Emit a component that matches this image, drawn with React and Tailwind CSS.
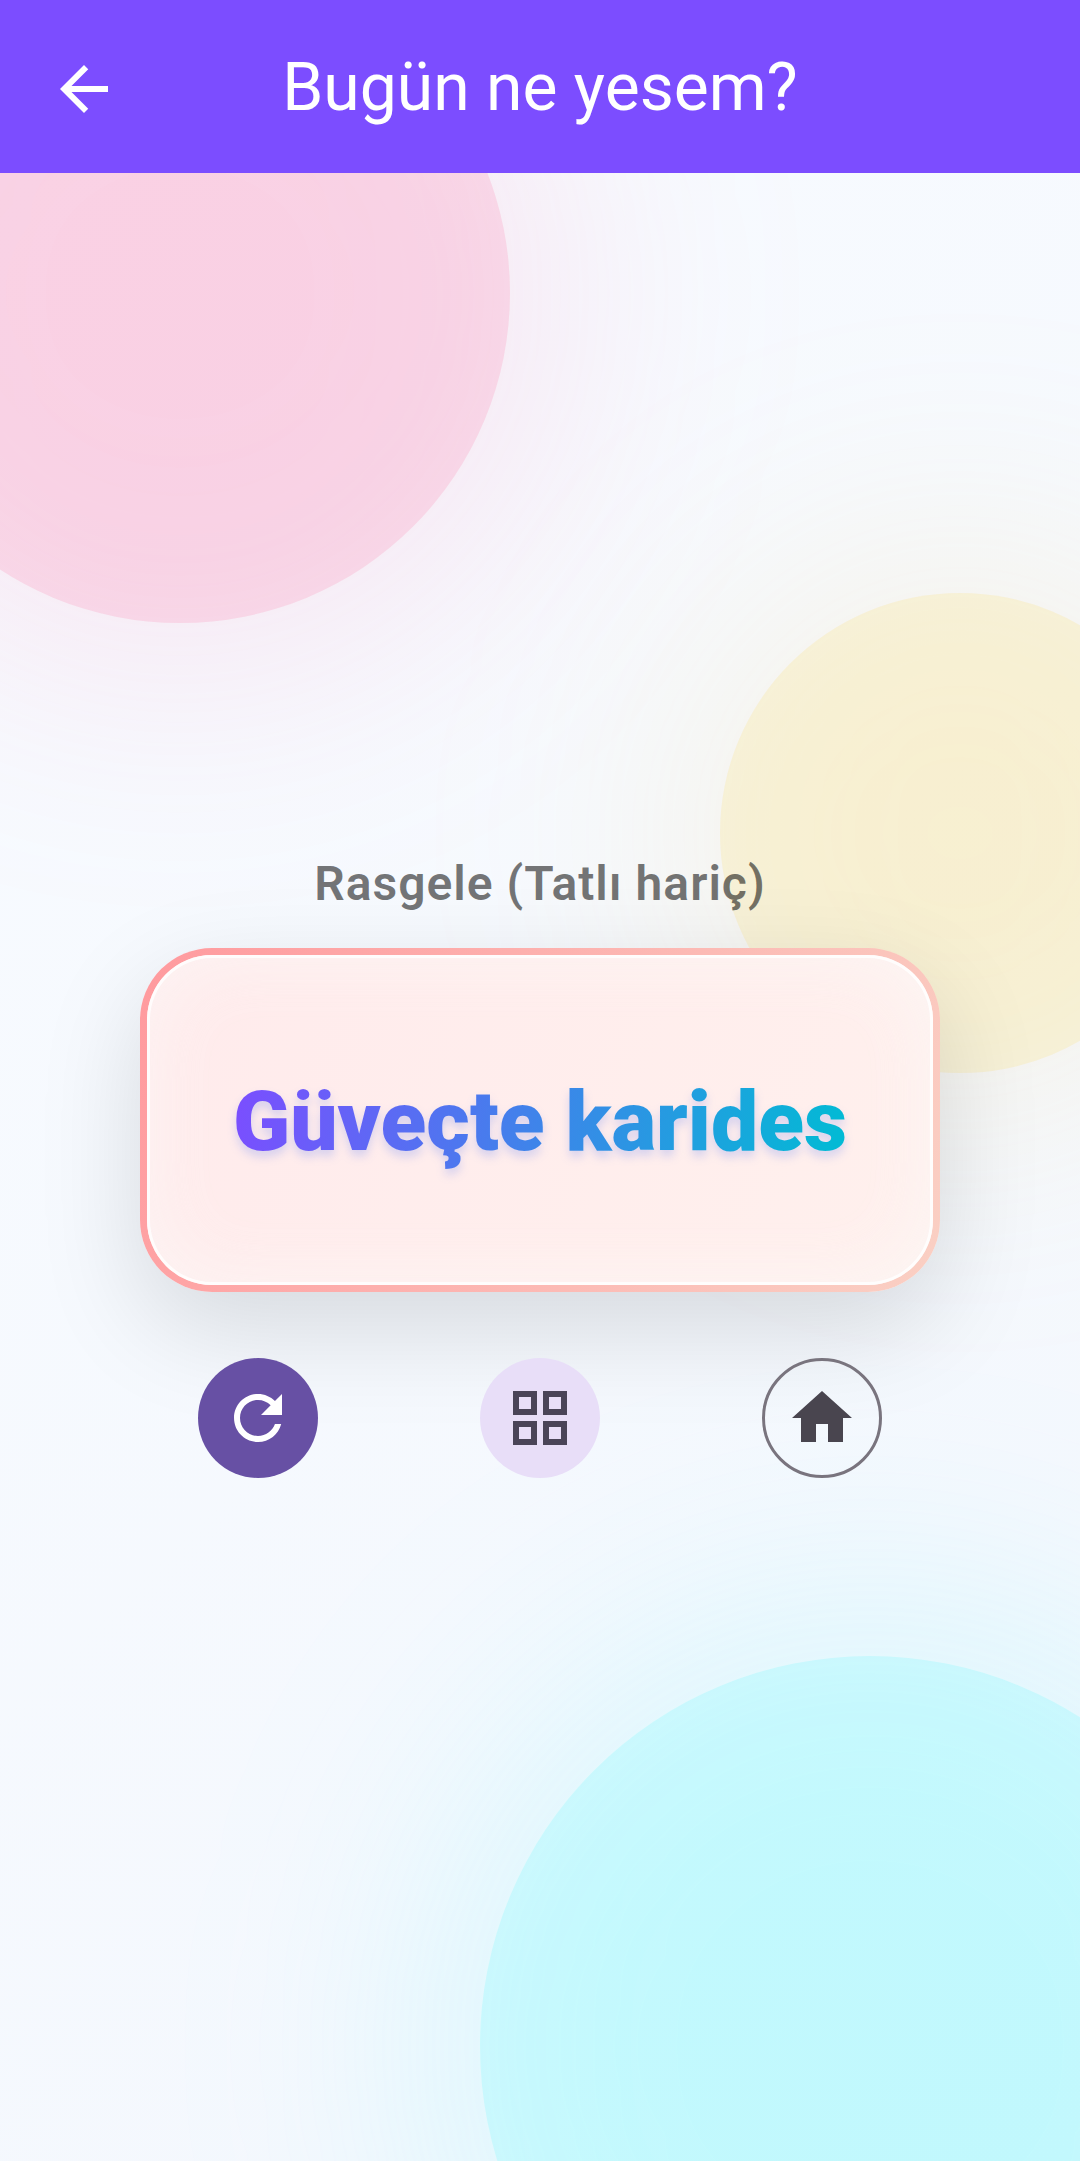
import React from "react";

function Icon({ path }) {
  return (
    <svg viewBox="0 0 24 24" className="size-[72px]" fill="currentColor" aria-hidden="true">
      <path d={path} />
    </svg>
  );
}

const ICONS = {
  back: "M20 11H7.83l5.59-5.59L12 4l-8 8 8 8 1.41-1.41L7.83 13H20v-2z",
  refresh:
    "M17.65 6.35C16.2 4.9 14.21 4 12 4c-4.42 0-7.99 3.58-7.99 8s3.57 8 7.99 8c3.73 0 6.84-2.55 7.73-6h-2.08c-.82 2.33-3.04 4-5.65 4-3.31 0-6-2.69-6-6s2.69-6 6-6c1.66 0 3.14.69 4.22 1.78L13 11h7V4l-2.35 2.35z",
  grid: "M3 3v8h8V3H3zm6 6H5V5h4v4zm-6 4v8h8v-8H3zm6 6H5v-4h4v4zm4-16v8h8V3h-8zm6 6h-4V5h4v4zm-6 4v8h8v-8h-8zm6 6h-4v-4h4v4z",
  home: "M10 20v-6h4v6h5v-8h3L12 3 2 12h3v8z",
};

/* A translucent disc with a wide soft glow of the same colour. */
function Blob({ place, glow, disc }) {
  return (
    <div className={`absolute rounded-full ${place}`}>
      <div className={`absolute -inset-[60px] rounded-full blur-[120px] ${glow}`} />
      <div className={`absolute inset-0 rounded-full ${disc}`} />
    </div>
  );
}

function RoundButton({ label, icon, look }) {
  return (
    <button
      type="button"
      aria-label={label}
      className={`flex size-[120px] items-center justify-center rounded-full ${look}`}
    >
      <Icon path={icon} />
    </button>
  );
}

export default function App() {
  return (
    <div className="flex min-h-screen flex-col font-['Roboto',sans-serif]">
      <header className="bg-[#7c4dff] pt-[5px] text-white">
        <div className="grid h-[168px] grid-cols-[72px_1fr_72px] items-center px-12">
          <button type="button" aria-label="Geri">
            <Icon path={ICONS.back} />
          </button>
          <h1 className="pb-0.5 text-center text-[66px] leading-[78px] font-normal">Bugün ne yesem?</h1>
        </div>
      </header>

      <main className="relative isolate flex flex-1 flex-col items-center justify-center overflow-hidden bg-linear-[135deg,#f8fbff,#f3f7fd]">
        <div className="absolute inset-0 -z-10" aria-hidden="true">
          <Blob
            place="-top-[210px] -left-[150px] size-[660px]"
            glow="bg-[#ff6ba4]/13"
            disc="bg-[#ff6ba0]/18"
          />
          <Blob
            place="-right-[180px] -bottom-[275px] size-[780px]"
            glow="bg-[#55f8ff]/15"
            disc="bg-[#30ffff]/15"
          />
          <Blob
            place="top-[420px] -right-[120px] size-[480px]"
            glow="bg-[#ffd060]/12"
            disc="bg-[#ffd94d]/17"
          />
        </div>

        <p className="text-[48px] leading-[56px] font-semibold tracking-[1px] text-black/54">
          Rasgele (Tatlı hariç)
        </p>

        <section className="mt-9 rounded-[72px] bg-linear-[113deg,#ff9a9e,#fad0c4] p-[7px] shadow-[0_36px_104px_rgba(0,0,0,0.13)]">
          <div className="flex h-[330px] items-center rounded-[65px] bg-linear-[113deg,#ffebec,#fff0ed] px-[86px] shadow-[inset_0_0_0_3px_rgba(255,255,255,0.8),inset_0_0_84px_rgba(250,252,250,0.6)]">
            <h2 className="bg-linear-[100deg,#7c4dff,#00bcd4] bg-clip-text pt-1 text-[84px] leading-[100px] font-black text-transparent drop-shadow-[0_6px_5px_rgba(70,110,245,0.22)]">
              Güveçte karides
            </h2>
          </div>
        </section>

        <div className="mt-[66px] flex w-full justify-evenly px-9">
          <RoundButton label="Yenile" icon={ICONS.refresh} look="bg-[#6750a4] text-white" />
          <RoundButton label="Kategoriler" icon={ICONS.grid} look="bg-[#e8def8] text-[#4a4458]" />
          <RoundButton label="Ana sayfa" icon={ICONS.home} look="border-3 border-[#79747e] text-[#49454f]" />
        </div>
      </main>
    </div>
  );
}
